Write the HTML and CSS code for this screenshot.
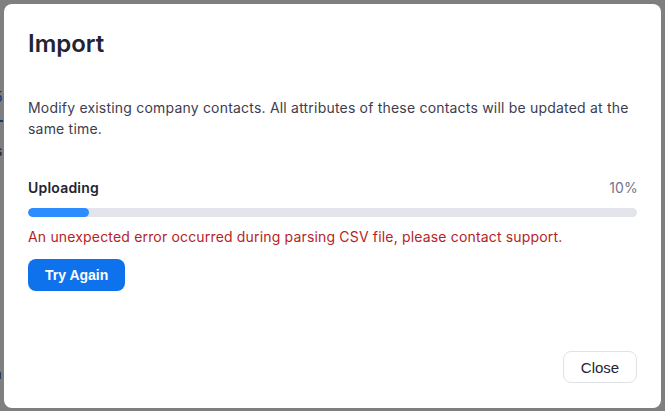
FILE: index.html
```html
<!DOCTYPE html>
<html lang="en">
<head>
<meta charset="utf-8">
<title>Import</title>
<link rel="stylesheet" href="styles.css">
</head>
<body>
<div class="backdrop-page" aria-hidden="true">
  <span class="bg-frag bg-num">5</span>
  <span class="bg-frag bg-line"></span>
  <span class="bg-frag bg-s">s</span>
  <span class="bg-frag bg-a">a</span>
</div>
<div class="modal">
  <h1 class="title">Import</h1>
  <p class="desc">Modify existing company contacts. All attributes of these contacts will be updated at the same time.</p>
  <div class="progress-head">
    <span class="progress-label">Uploading</span>
    <span class="progress-pct">10%</span>
  </div>
  <div class="track"><div class="fill" style="width:10%"></div></div>
  <p class="error">An unexpected error occurred during parsing CSV file, please contact support.</p>
  <div class="actions-left"><button class="btn-primary">Try Again</button></div>
  <div class="footer"><button class="btn-close">Close</button></div>
</div>
</body>
</html>
```
FILE: styles.css
```css
html, body {
  margin: 0;
  padding: 0;
}
body {
  width: 665px;
  height: 411px;
  background: #7f7f80;
  font-family: Inter, "Noto Sans", sans-serif;
  position: relative;
  overflow: hidden;
  padding: 4px;
  box-sizing: border-box;
}
.backdrop-page {
  position: absolute;
  inset: 0;
}
.bg-frag {
  position: absolute;
  font-family: Inter, sans-serif;
  font-size: 14px;
  line-height: 16px;
}
.bg-num { left: -6px; top: 89px; color: #0d3a76; }
.bg-line { left: 0; top: 120px; width: 3px; height: 2px; background: #0d3a76; }
.bg-s { left: -5px; top: 143px; color: #232333; }
.bg-a { left: -6px; top: 366px; color: #2a2a33; }

.modal {
  position: relative;
  width: 657px;
  height: 404px;
  background: #fff;
  border-radius: 8px;
  box-sizing: border-box;
  padding: 24px 24px 25px 24px;
  display: flex;
  flex-direction: column;
}
.title {
  margin: 0;
  font-size: 24px;
  line-height: 32px;
  font-weight: 600;
  color: #232333;
}
.desc {
  margin: 37px 0 0 0;
  font-size: 14px;
  line-height: 21px;
  letter-spacing: 0.2px;
  color: #3d3d4e;
}
.progress-head {
  margin-top: 39px;
  display: flex;
  justify-content: space-between;
  font-size: 14px;
  line-height: 20px;
  letter-spacing: 0.2px;
}
.progress-label {
  font-weight: 600;
  color: #232333;
}
.progress-pct {
  color: #747487;
  margin-right: -1px;
}
.track {
  margin-top: 10px;
  height: 9px;
  border-radius: 5px;
  background: #e4e4ed;
  overflow: hidden;
}
.fill {
  height: 100%;
  border-radius: 5px;
  background: #2d8cff;
}
.error {
  margin: 10px 0 0 0;
  font-size: 14px;
  line-height: 20px;
  letter-spacing: 0.17px;
  color: #b52427;
}
.actions-left {
  margin-top: 12px;
  display: flex;
}
.btn-primary {
  height: 32px;
  padding: 0 17px;
  border: none;
  border-radius: 8px;
  background: #0e72ed;
  color: #fff;
  font-family: "Liberation Sans", Arial, sans-serif;
  font-size: 14px;
  font-weight: 700;
}
.footer {
  margin-top: auto;
  display: flex;
  justify-content: flex-end;
}
.btn-close {
  height: 32px;
  width: 74px;
  padding: 0;
  border: 1px solid #dfe3e8;
  border-radius: 8px;
  background: #fff;
  color: #232333;
  font-family: "Liberation Sans", Arial, sans-serif;
  font-size: 15px;
}
```
